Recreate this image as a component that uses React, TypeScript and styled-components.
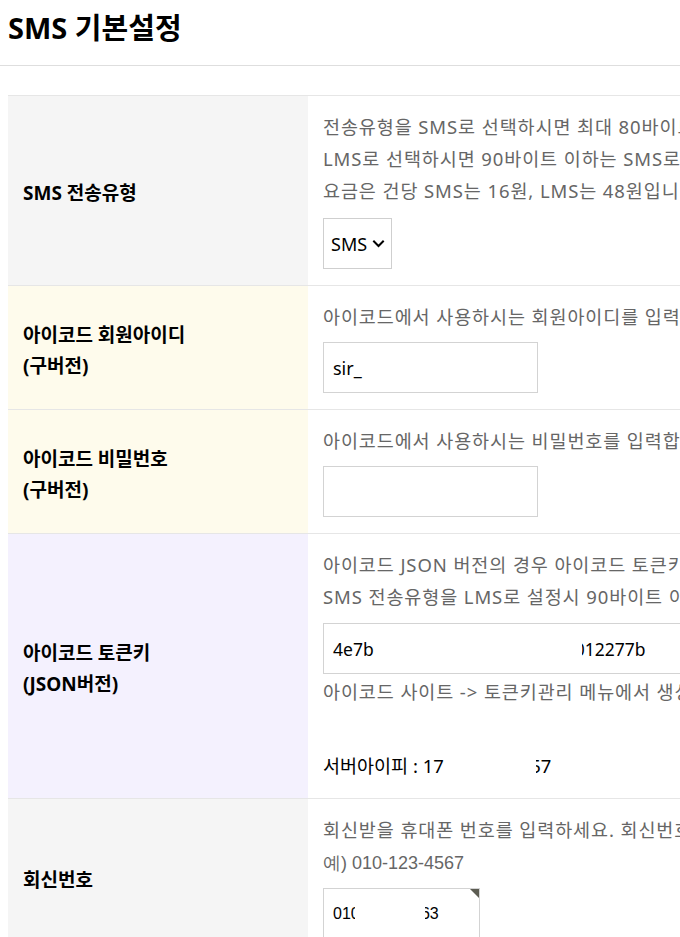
import React from "react";
import styled, { createGlobalStyle } from "styled-components";

const GlobalStyle = createGlobalStyle`
  html, body { margin: 0; padding: 0; background: #fff; overflow: hidden; }
  body {
    font-family: "Noto Sans", "Noto Sans CJK KR", sans-serif;
    color: #000;
  }
  * { box-sizing: border-box; }
`;

type Tone = "gray" | "yellow" | "violet";
const toneBg: Record<Tone, string> = {
  gray: "#f5f5f5",
  yellow: "#fefbec",
  violet: "#f4f1fe",
};

const Page = styled.div`
  width: 680px;
  overflow: hidden;
`;

const Header = styled.header`
  padding: 11px 8px 20px;
  border-bottom: 1px solid #dedede;
`;

const Title = styled.h1`
  margin: 0;
  font-size: 29px;
  line-height: 34px;
  font-weight: 700;
`;

const Section = styled.section`
  margin: 29px 0 0 8px;
`;

const Table = styled.table`
  border-collapse: collapse;
  border-top: 1px solid #e6e6e6;
`;

const Row = styled.tr`
  border-bottom: 1px solid #e6e6e6;
`;

const Label = styled.th<{ $tone: Tone }>`
  width: 300px;
  min-width: 300px;
  padding: 6px 0 0 15px;
  background: ${(p) => toneBg[p.$tone]};
  text-align: left;
  vertical-align: middle;
  font-size: 19px;
  line-height: 31px;
  font-weight: 700;
  white-space: nowrap;
`;

const Cell = styled.td`
  padding: 15px 15px 16px;
  vertical-align: top;
  background: #fff;
`;

const Info = styled.p<{ $gap?: number }>`
  margin: ${(p) => p.$gap ?? 0}px 0 0;
  font-size: 18.5px;
  line-height: 32px;
  letter-spacing: 0.9px;
  color: #666;
  white-space: nowrap;
`;

const Plain = styled.p<{ $gap?: number }>`
  margin: ${(p) => p.$gap ?? 0}px 0 0;
  font-size: 18.5px;
  line-height: 32px;
  color: #000;
  white-space: nowrap;
  display: flex;
  align-items: center;
`;

const SelectWrap = styled.div`
  position: relative;
  width: 69px;
  margin-top: 11px;
`;

const Select = styled.select`
  appearance: none;
  -webkit-appearance: none;
  display: block;
  width: 69px;
  height: 51px;
  padding: 0 0 0 7px;
  border: 1px solid #cfcfcf;
  border-radius: 0;
  background: #fff;
  font-family: inherit;
  font-size: 18px;
  color: #000;
`;

const Chevron = styled.svg`
  position: absolute;
  right: 7px;
  top: 21px;
  width: 13px;
  height: 9px;
  pointer-events: none;
`;

const Input = styled.input<{ $w: number }>`
  display: block;
  width: ${(p) => p.$w}px;
  height: 51px;
  margin-top: 9px;
  padding: 0 9px;
  border: 1px solid #d3d3d3;
  border-radius: 0;
  background: #fff;
  font-family: inherit;
  font-size: 18px;
  color: #000;
  outline: none;
`;

const Field = styled.div<{ $w: number; $gap: number; $narrow?: boolean; $required?: boolean }>`
  position: relative;
  display: flex;
  align-items: center;
  width: ${(p) => p.$w}px;
  height: 51px;
  margin-top: ${(p) => p.$gap}px;
  padding: 0 9px;
  border: 1px solid #d3d3d3;
  background: #fff;
  font-family: ${(p) => (p.$narrow ? '"Liberation Sans", Arial, sans-serif' : "inherit")};
  font-size: ${(p) => (p.$narrow ? 16 : 17.5)}px;
  color: #000;
  white-space: nowrap;
  overflow: hidden;

  &::after {
    content: "";
    display: ${(p) => (p.$required ? "block" : "none")};
    position: absolute;
    top: 0;
    right: 0;
    border-top: 9px solid #5c5c52;
    border-left: 9px solid transparent;
  }
`;

const Gap = styled.span<{ $w: number }>`
  display: inline-block;
  width: ${(p) => p.$w}px;
`;

const Clip = styled.span<{ $w: number; $side: "left" | "right" }>`
  display: inline-flex;
  width: ${(p) => p.$w}px;
  overflow: hidden;
  justify-content: ${(p) => (p.$side === "left" ? "flex-end" : "flex-start")};
`;

const Example = styled.span`
  font-family: "Liberation Sans", Arial, sans-serif;
  font-size: 18px;
  letter-spacing: 0;
`;

export default function App() {
  return (
    <Page>
      <GlobalStyle />
      <Header>
        <Title>SMS 기본설정</Title>
      </Header>
      <Section>
        <Table>
          <tbody>
            <Row>
              <Label $tone="gray">SMS 전송유형</Label>
              <Cell>
                <Info>전송유형을 SMS로 선택하시면 최대 80바이트까지 전송하실 수 있으며</Info>
                <Info>LMS로 선택하시면 90바이트 이하는 SMS로, 그 이상은 2000바이트까지 LMS로 전송됩니다.</Info>
                <Info>요금은 건당 SMS는 16원, LMS는 48원입니다.</Info>
                <SelectWrap>
                  <Select defaultValue="SMS" aria-label="SMS 전송유형">
                    <option value="SMS">SMS</option>
                    <option value="LMS">LMS</option>
                  </Select>
                  <Chevron viewBox="0 0 13 9" aria-hidden="true">
                    <path d="M1.3 1.8 L6.5 7 L11.7 1.8" fill="none" stroke="#000" strokeWidth="2" />
                  </Chevron>
                </SelectWrap>
              </Cell>
            </Row>
            <Row>
              <Label $tone="yellow">
                아이코드 회원아이디
                <br />
                (구버전)
              </Label>
              <Cell>
                <Info>아이코드에서 사용하시는 회원아이디를 입력합니다.</Info>
                <Input $w={215} type="text" defaultValue="sir_" aria-label="아이코드 회원아이디" />
              </Cell>
            </Row>
            <Row>
              <Label $tone="yellow">
                아이코드 비밀번호
                <br />
                (구버전)
              </Label>
              <Cell>
                <Info>아이코드에서 사용하시는 비밀번호를 입력합니다.</Info>
                <Input $w={215} type="password" aria-label="아이코드 비밀번호" />
              </Cell>
            </Row>
            <Row>
              <Label $tone="violet">
                아이코드 토큰키
                <br />
                (JSON버전)
              </Label>
              <Cell>
                <Info>아이코드 JSON 버전의 경우 아이코드 토큰키를 입력시 실행됩니다.</Info>
                <Info>SMS 전송유형을 LMS로 설정시 90바이트 이내는 SMS로, 90 ~ 2000 바이트는 LMS로 그 이상은 절삭 되어 LMS로 발송됩니다.</Info>
                <Field $w={420} $gap={10}>
                  <span>4e7b</span>
                  <Gap $w={208} />
                  <Clip $w={3} $side="left">0</Clip>
                  <span>12277b</span>
                </Field>
                <Info $gap={2}>아이코드 사이트 -&gt; 토큰키관리 메뉴에서 생성한 토큰키를 입력합니다.</Info>
                <Plain $gap={42}>
                  <span>서버아이피 : 17</span>
                  <Gap $w={92} />
                  <Clip $w={5} $side="left">5</Clip>
                  <span>7</span>
                </Plain>
              </Cell>
            </Row>
            <Row>
              <Label $tone="gray">회신번호</Label>
              <Cell>
                <Info>회신받을 휴대폰 번호를 입력하세요. 회신번호는 발신번호로 사전등록된 번호와 동일해야 합니다.</Info>
                <Info>
                  <Example>예) 010-123-4567</Example>
                </Info>
                <Field $w={157} $gap={9} $narrow $required>
                  <span>01</span>
                  <Clip $w={4} $side="right">0</Clip>
                  <Gap $w={70} />
                  <Clip $w={5} $side="left">6</Clip>
                  <span>3</span>
                </Field>
              </Cell>
            </Row>
          </tbody>
        </Table>
      </Section>
    </Page>
  );
}
